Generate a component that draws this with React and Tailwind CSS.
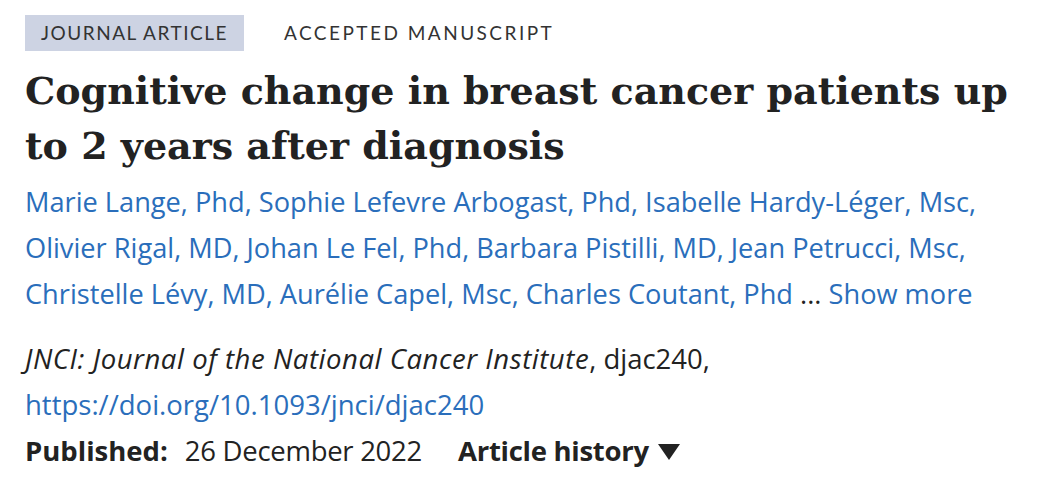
export default function App() {
  const lines = [
    ["Marie Lange, Phd", "Sophie Lefevre Arbogast, Phd", "Isabelle Hardy-Léger, Msc"],
    ["Olivier Rigal, MD", "Johan Le Fel, Phd", "Barbara Pistilli, MD", "Jean Petrucci, Msc"],
    ["Christelle Lévy, MD", "Aurélie Capel, Msc", "Charles Coutant, Phd"],
  ];

  return (
    <div className="bg-white w-[1049px] h-[492px] overflow-hidden font-['Open_Sans',sans-serif] text-[#222]">
      <div className="pl-[25px] pr-[20px] pt-[15px]">
        {/* labels */}
        <div className="flex items-center text-[19px] uppercase text-[#333] font-['Lato',sans-serif]">
          <span className="bg-[#cdd3e3] h-[36px] px-[16px] flex items-center tracking-[0.08em]">Journal Article</span>
          <span className="ml-[40px] tracking-[0.13em]">Accepted Manuscript</span>
        </div>

        {/* title */}
        <h1 className="mt-[12px] font-['DejaVu_Serif',serif] font-bold text-[38px] leading-[55px] text-[#222]">
          Cognitive change in breast cancer patients up
          <br />
          to 2 years after diagnosis
        </h1>

        {/* authors */}
        <div className="mt-[6px] text-[27.2px] leading-[46px] text-[#2a6ebb] whitespace-nowrap">
          {lines.map((line, li) => (
            <div key={li}>
              {line.map((a, i) => (
                <span key={a}>
                  <a href="#" className="text-[#2a6ebb]">{a}</a>
                  {li === 2 && i === line.length - 1 ? " " : ", "}
                </span>
              ))}
              {li === 2 && (
                <>
                  <span className="text-[#222]">... </span>
                  <a href="#" className="text-[#2a6ebb]">Show more</a>
                </>
              )}
            </div>
          ))}
        </div>

        {/* citation */}
        <div className="mt-[19px] text-[27.5px] leading-[46px]">
          <div>
            <em className="tracking-[0.02em]">JNCI: Journal of the National Cancer Institute</em>, djac240,
          </div>
          <a href="#" className="text-[#2a6ebb]">https://doi.org/10.1093/jnci/djac240</a>
          <div className="flex items-center">
            <span className="font-bold">Published:</span>
            <span className="ml-[17px] tracking-[-0.01em]">26 December 2022</span>
            <span className="ml-[36px] font-bold tracking-[-0.01em]">Article history</span>
            <svg className="ml-[9px] mt-[2px]" width="22" height="16" viewBox="0 0 22 16">
              <polygon points="0,0 22,0 11,16" fill="#222" />
            </svg>
          </div>
        </div>
      </div>
    </div>
  );
}
